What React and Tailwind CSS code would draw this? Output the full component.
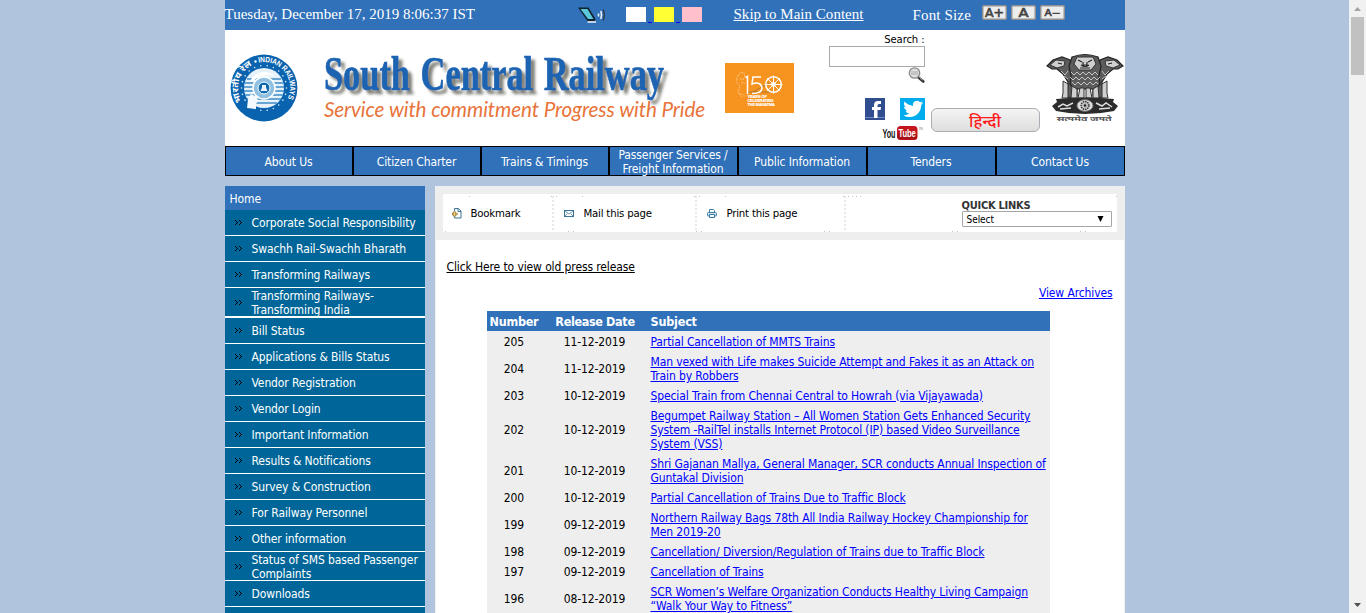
const NAV = [
  ['About Us', 'w-[126px]'],
  ['Citizen Charter', 'w-[126px]'],
  ['Trains & Timings', 'w-[126px]'],
  ['Passenger Services /\nFreight Information', 'w-[127px]'],
  ['Public Information', 'w-[127px]'],
  ['Tenders', 'w-[127px]'],
  ['Contact Us', 'w-[127px]'],
];

const MENU = [
  ['Corporate Social Responsibility', 'h-[26px] border-b'],
  ['Swachh Rail-Swachh Bharath', 'h-[26px] border-b'],
  ['Transforming Railways', 'h-[26px] border-b'],
  ['Transforming Railways-\nTransforming India', 'h-[30px] border-b-2 pt-px'],
  ['Bill Status', 'h-[26px] border-b'],
  ['Applications & Bills Status', 'h-[26px] border-b'],
  ['Vendor Registration', 'h-[26px] border-b'],
  ['Vendor Login', 'h-[26px] border-b'],
  ['Important Information', 'h-[26px] border-b'],
  ['Results & Notifications', 'h-[26px] border-b'],
  ['Survey & Construction', 'h-[26px] border-b'],
  ['For Railway Personnel', 'h-[26px] border-b'],
  ['Other information', 'h-[26px] border-b'],
  ['Status of SMS based Passenger\nComplaints', 'h-[29px] border-b pt-px'],
  ['Downloads', 'h-[26px] border-b'],
  ['', 'h-[26px] border-b'],
];

const RELEASES = [
  ['205', '11-12-2019', 'Partial Cancellation of MMTS Trains'],
  ['204', '11-12-2019', 'Man vexed with Life makes Suicide Attempt and Fakes it as an Attack on\nTrain by Robbers'],
  ['203', '10-12-2019', 'Special Train from Chennai Central to Howrah (via Vijayawada)'],
  ['202', '10-12-2019', 'Begumpet Railway Station – All Women Station Gets Enhanced Security\nSystem -RailTel installs Internet Protocol (IP) based Video Surveillance\nSystem (VSS)'],
  ['201', '10-12-2019', 'Shri Gajanan Mallya, General Manager, SCR conducts Annual Inspection of\nGuntakal Division'],
  ['200', '10-12-2019', 'Partial Cancellation of Trains Due to Traffic Block'],
  ['199', '09-12-2019', 'Northern Railway Bags 78th All India Railway Hockey Championship for\nMen 2019-20'],
  ['198', '09-12-2019', 'Cancellation/ Diversion/Regulation of Trains due to Traffic Block'],
  ['197', '09-12-2019', 'Cancellation of Trains'],
  ['196', '08-12-2019', 'SCR Women’s Welfare Organization Conducts Healthy Living Campaign\n“Walk Your Way to Fitness”'],
];

function ScreenReaderIcon() {
  return (
    <svg width="28" height="17" viewBox="0 0 28 17" className="-ml-px shrink-0">
      <path d="M0 1.500h10.500l7 11.500-1 2H9.500z" fill="#10222c" />
      <path d="M2.500 3h7l6 10h-5.500z" fill="#5bc8dc" />
      <path d="M9.500 16h8.500" stroke="#fff" strokeWidth="1.400" />
      <path d="M20.500 7.500v3M22.800 5q1.500 4 0 8" fill="none" stroke="#eef2f6" strokeWidth="1.600" />
      <path d="M25.200 3.500q2.200 5.500 0 11" fill="none" stroke="#333" strokeWidth="1.200" />
    </svg>
  );
}

function SizeButton({ label, wide }) {
  return (
    <svg width="25" height="15" viewBox="0 0 25 15">
      <rect x=".75" y=".75" width="23.500" height="13.500" rx="1" fill="#ededed" stroke="#8f9192" strokeWidth="1.500" />
      <text x="12.500" y={label === 'A−' ? 10.8 : 11.5} textAnchor="middle" textLength={wide} lengthAdjust="spacingAndGlyphs" fontFamily="DejaVu Sans" stroke="#444" strokeWidth=".6" fontSize={label === 'A−' ? 9 : 11.5} fill="#444">{label}</text>
    </svg>
  );
}

function RailwayEmblem() {
  const dots = Array.from({ length: 22 }, (_, i) => (i * 2 * Math.PI) / 22);
  return (
    <svg width="68" height="68" viewBox="0 0 68 68">
      <defs>
        <path id="arcR" d="M28.700 8.600A26 26 0 0 1 55.500 48.800" />
        <path id="arcL" d="M12 47.500A25.700 25.700 0 0 1 23.500 10.500" />
      </defs>
      <circle cx="34" cy="34" r="33.400" fill="#0a63ae" />
      {dots.map((a, i) => <circle key={i} cx={34 + 22.500 * Math.cos(a)} cy={34 + 22.500 * Math.sin(a)} r=".8" fill="#d9ecfa" />)}
      <circle cx="34" cy="34" r="20" fill="#e6f2fa" />
      <path d="M17 25h34M15 29h38M14 33h40M14 37h40M15 41h38M17 45h34M21 49h26" stroke="#3f8cc6" strokeWidth="1.300" />
      <circle cx="34" cy="34" r="11" fill="#8fc0e2" stroke="#fff" strokeWidth="1.500" />
      <circle cx="34" cy="34" r="6" fill="#0f6ab2" stroke="#fff" />
      <path d="M32 31h4v2.500l1.500 3.500h-7l1.500-3.500z" fill="#e8f4fc" />
      <path d="M17 54l1-9 3-5 6 3 1 4-2 3v5z" fill="#f4fafd" />
      <path d="M20 27q5-9 14-9q8 0 10 4q-6-2-11 0q-7 1-10 6z" fill="#fff" />
      <text fontFamily="Liberation Sans" fontWeight="bold" fontSize="7.600" fill="#fff"><textPath href="#arcR" textLength="57" lengthAdjust="spacingAndGlyphs">INDIAN RAILWAYS</textPath></text>
      <text fontFamily="Noto Sans, sans-serif" fontWeight="bold" fontSize="8.500" fill="#fff"><textPath href="#arcL" textLength="42" lengthAdjust="spacingAndGlyphs">भारतीय रेल</textPath></text>
      <circle cx="25.500" cy="7.500" r="1.200" fill="#fff" />
    </svg>
  );
}

function Wordmark() {
  return (
    <svg width="400" height="84" viewBox="0 0 400 84">
      <defs>
        <filter id="soft" x="-5%" y="-20%" width="112%" height="150%">
          <feDropShadow dx="4" dy="4" stdDeviation="1.700" floodColor="#55554a" floodOpacity=".75" />
        </filter>
      </defs>
      <text x="4" y="45" textLength="340" lengthAdjust="spacingAndGlyphs" wordSpacing="3" filter="url(#soft)" fill="#1c63b2" stroke="#1c63b2" strokeWidth=".6" fontFamily="Liberation Serif" fontWeight="bold" fontSize="49">South Central Railway</text>
      <text x="4" y="72" fontFamily="Lato" fontStyle="italic" fontSize="21" fill="#e8743b" textLength="381" lengthAdjust="spacingAndGlyphs">Service with commitment Progress with Pride</text>
    </svg>
  );
}

function MahatmaBadge() {
  return (
    <svg width="69" height="50" viewBox="0 0 69 50">
      <rect width="69" height="50" fill="#f79420" />
      <path d="M13 13q2-5 6-3l1 5M13 13q-2 3-1 7l3 3-2 6 4 5M15 16h5M16 20q3-1 4 1M14 31q5 0 6 3" fill="none" stroke="#fbc98c" strokeDasharray="1.500 1" />
      <path d="M28 29l16-9M23 29h28" stroke="#8d6a35" strokeWidth=".7" />
      <g fill="none" stroke="#fff" strokeWidth="1.500">
        <path d="M20.500 14.500l2-1v17.500M36 14h-8l-1 7q9-3 10 4q0 5.500-10 5.500" />
        <circle cx="48.500" cy="21.500" r="7.800" />
        <circle cx="48.500" cy="21.500" r="1.700" />
        <path strokeWidth="1" d="M48.500 12.500v18M39.500 21.500h18M42.300 15.300l12.400 12.400M42.300 27.700l12.400-12.400" />
      </g>
      <g fontFamily="Liberation Sans" fontWeight="bold" fontSize="3.600" fill="#fff" stroke="#fff" strokeWidth=".15">
        <text transform="translate(22.5 34.8) scale(1.1 1)">YEARS OF</text>
        <text transform="translate(22.5 38.7) scale(1.06 1)">CELEBRATING</text>
        <text transform="translate(22.5 42.6) scale(1.08 1)">THE MAHATMA</text>
      </g>
    </svg>
  );
}

function LionCapital() {
  return (
    <svg width="80" height="72" viewBox="0 0 80 72">
      <g fill="#5c5c5c" stroke="#222" strokeWidth="1.200">
        <path d="M2 13l6-6 9-3 8 3 3 8 4 6v22l-10 2 1-16-5-8-6-5-5 0z" />
        <path d="M78 13l-6-6-9-3-8 3-3 8-4 6v22l10 2-1-16 5-8 6-5 5 0z" />
        <path d="M27 4q13-5 26 0l3 9-2 10 1 8-4 5H29l-4-5 1-8-2-10z" />
      </g>
      <g fill="#cfcfcf" stroke="#333" strokeWidth="1">
        <path d="M32 4h16l3 7-5 6H34l-5-6z" />
        <path d="M5 12l6-5 9 1-1 5-7 2zM75 12l-6-5-9 1 1 5 7 2z" />
        <path d="M18 28l5 3v14h-6l1-5zM62 28l-5 3v14h6l-1-5zM27 33l5 3v9h-6zM53 33l-5 3v9h6zM35 35h4v10h-6zM45 35h-4v10h6z" />
      </g>
      <path d="M33 7l4 2M47 7l-4 2M36 12q4 3 8 0M35 15h10M13 10l4 1M67 10l-4 1M38 9v3h4V9" stroke="#222" strokeWidth="1.200" fill="none" />
      <path d="M26 19l3 3 3-3 3 3 3-3 3 3 3-3 3 3 3-3 3 3M25 24l3 3 3-3 3 3 3-3 3 3 3-3 3 3 3-3 3 3 3-3M27 29l3 3 3-3 3 3 3-3 3 3 3-3 3 3 3-3 2 2M16 18l4 4 3-4M19 23l4 3M64 18l-4 4-3-4M61 23l-4 3" stroke="#c4c4c4" fill="none" />
      <path d="M11 46q29-3 58 0l-1 3 5 4-4 5q-29 6-58 0l-4-5 5-4z" fill="#2b2b2b" />
      <ellipse cx="40" cy="52.500" rx="8" ry="5.800" fill="#ddd" stroke="#777" />
      <circle cx="40" cy="52.500" r="4" fill="#bbb" stroke="#333" strokeWidth="1.300" strokeDasharray="1.500 .8" />
      <circle cx="40" cy="52.500" r="1.200" fill="#222" />
      <path d="M13 54l5-3 4 2 6-3M15 56l11-1M51 50l6 3 4-3 6 4M54 56l11-1" stroke="#ddd" strokeWidth="1.500" fill="none" />
      <text x="39" y="68" textAnchor="middle" textLength="55" lengthAdjust="spacingAndGlyphs" fontFamily="Noto Sans, sans-serif" fontSize="7" fontWeight="bold" fill="#555">सत्यमेव जयते</text>
    </svg>
  );
}

function Magnifier() {
  return (
    <svg width="17" height="16" viewBox="0 0 17 16" className="block">
      <path d="M10.500 10.500l4.800 4" stroke="#333" strokeWidth="2.600" strokeLinecap="round" />
      <circle cx="6.500" cy="6" r="5.200" fill="#dedede" stroke="#8b8b8b" strokeWidth="1.300" />
      <path d="M3 5h7M3 7h7" stroke="#aaa" />
      <path d="M11.500 10.500l3 2.500" stroke="#bbb" />
    </svg>
  );
}

function Facebook() {
  return (
    <svg width="20" height="22" viewBox="0 0 20 22">
      <rect width="20" height="22" fill="#2f4d8f" />
      <path d="M0 19h20v1H0z" fill="#6e86bb" />
      <path d="M9 20v-8H7V9h2V7q0-4 4-4h3v3h-2q-1.500 0-1.500 1.500V9H16l-.4 3h-3.100v8z" fill="#fff" />
    </svg>
  );
}

function Twitter() {
  return (
    <svg width="25" height="22" viewBox="0 0 25 22">
      <rect width="25" height="22" fill="#00aced" />
      <path transform="translate(3.300 1) scale(.83)" d="M23.950 4.570a10 10 0 01-2.820.780 4.960 4.960 0 002.160-2.720c-.950.550-2 .950-3.130 1.180a4.920 4.920 0 00-8.380 4.480C7.690 8.100 4.070 6.130 1.640 3.160a4.920 4.920 0 001.520 6.570 4.900 4.900 0 01-2.230-.610v.060c0 2.380 1.690 4.370 3.950 4.820a5 5 0 01-2.210.090 4.940 4.940 0 004.600 3.420A9.870 9.870 0 010 19.540a13.990 13.990 0 007.550 2.210c9.050 0 14-7.500 14-13.980 0-.210 0-.420-.020-.630a9.940 9.940 0 002.420-2.570z" fill="#fff" />
    </svg>
  );
}

function YouTube() {
  return (
    <svg width="43" height="17" viewBox="0 0 43 17">
      <text transform="translate(.5 12.5) scale(.6 1)" fontFamily="Liberation Sans" fontWeight="bold" fontSize="12" fill="#111">You</text>
      <rect x="15" y="1" width="20.500" height="14" rx="3.500" fill="#c4161c" />
      <rect x="15.500" y="8" width="19.500" height="6.500" rx="3" fill="#8f0d11" opacity=".6" />
      <text transform="translate(16.5 12.3) scale(.66 1)" fontFamily="Liberation Sans" fontWeight="bold" fontSize="11.500" fill="#fff">Tube</text>
      <text x="37" y="5" fontFamily="Liberation Sans" fontSize="4" fill="#888">IN</text>
    </svg>
  );
}

function Chevrons() {
  return (
    <svg width="7" height="5" viewBox="0 0 7 5" className="ml-[10px] mr-[10px] shrink-0" shapeRendering="crispEdges">
      <path d="M0 0h1v1H0zM1 1h1v1H1zM2 2h1v1H2zM1 3h1v1H1zM0 4h1v1H0zM4 0h1v1H4zM5 1h1v1H5zM6 2h1v1H6zM5 3h1v1H5zM4 4h1v1H4z" fill="#000" />
    </svg>
  );
}

function BookmarkIcon() {
  return (
    <svg width="11" height="11" viewBox="0 0 11 11" className="shrink-0">
      <path d="M3.500 3V.5h4l2.500 2.500v7H3.500V8.500M7 .5V3.500h3" fill="#fff" stroke="#3d7397" />
      <path d="M3.500 3.500v5M1 6h5.500" stroke="#8a6d2f" strokeWidth="2.600" />
      <path d="M3.500 4v4M1.500 6h4.500" stroke="#f3cf70" />
    </svg>
  );
}

function MailIcon() {
  return (
    <svg width="10" height="7" viewBox="0 0 10 7" className="shrink-0">
      <rect x=".5" y=".5" width="9" height="6" fill="#fff" stroke="#3d7397" />
      <path d="M1 1l4 3 4-3M1 6l2.500-2.500M9 6L6.500 3.500" fill="none" stroke="#5d93b5" strokeWidth=".9" />
    </svg>
  );
}

function PrintIcon() {
  return (
    <svg width="10" height="9" viewBox="0 0 10 9" className="shrink-0">
      <path d="M2.500 3.500v-3h4l1 1v2" fill="#fff" stroke="#3d80aa" />
      <rect x=".5" y="3.500" width="9" height="3.500" rx="1" fill="#cfe2ee" stroke="#3d80aa" />
      <path d="M2.500 5.500h5v3h-5z" fill="#fff" stroke="#2f78a8" />
    </svg>
  );
}

function Divider() {
  return (
    <svg width="2" height="35" viewBox="0 0 2 35" className="mt-[2px] shrink-0 self-start">
      <path d="M1 0v35" stroke="#e8e8e8" strokeWidth="2" strokeDasharray="2 2" />
    </svg>
  );
}

function Dots() {
  return (
    <svg width="674" height="38" viewBox="0 0 674 38" className="pointer-events-none absolute left-0 top-0">
      <path fill="#c4c4c4" d="M26 2h1v1h-1zM108 2h1v1h-1zM113 2h1v1h-1zM139 2h1v1h-1zM251 2h1v1h-1zM256 2h1v1h-1zM282 2h1v1h-1zM400 2h1v1h-1zM405 2h1v1h-1zM409 2h1v1h-1zM413 2h1v1h-1zM417 2h1v1h-1zM673 2h1v1h-1zM2 37h1v1h-1zM125 37h1v1h-1zM130 37h1v1h-1zM253 37h1v1h-1zM258 37h1v1h-1zM381 37h1v1h-1zM386 37h1v1h-1zM509 37h1v1h-1zM514 37h1v1h-1zM637 37h1v1h-1zM642 37h1v1h-1z" />
    </svg>
  );
}

function TopBar() {
  return (
    <div className="flex h-[30px] bg-[#3071b9] font-['Liberation_Serif',serif] text-[15px] leading-[28px] tracking-[-0.04px] text-white">
      <span className="w-[354px] whitespace-nowrap text-[15px] tracking-[0px]">Tuesday, December 17, 2019 8:06:37 IST</span>
      <div className="w-[47px] pt-[6px]"><ScreenReaderIcon /></div>
      <div className="flex w-[108px] pt-[7px]">
        <span className="h-[15px] w-[20px] bg-white" />
        <span className="mx-[2px] mt-[15px] h-px w-[4px] bg-[#0000ee]" />
        <span className="h-[15px] w-[20px] bg-[#ffff33]" />
        <span className="mx-[2px] mt-[15px] h-px w-[4px] bg-[#0000ee]" />
        <span className="h-[15px] w-[20px] bg-[#ffc0cb]" />
      </div>
      <a className="w-[179px] whitespace-nowrap tracking-[0.02px] underline">Skip to Main Content</a>
      <span className="w-[69px] whitespace-nowrap pt-px tracking-[0.15px]">Font Size</span>
      <div className="flex gap-[4px] pt-[5px]">
        <SizeButton label="A+" wide={19} />
        <SizeButton label="A" wide={10} />
        <SizeButton label="A−" wide={16} />
      </div>
    </div>
  );
}

function Banner() {
  return (
    <div className="flex h-[116px] bg-white">
      <div className="w-[95px] pl-[5px] pt-[24px]"><RailwayEmblem /></div>
      <div className="w-[405px] pt-[15px]"><Wordmark /></div>
      <div className="w-[104px] pt-[33px]"><MahatmaBadge /></div>
      <div className="flex w-[96px] flex-col items-end">
        <span className="h-[16px] whitespace-nowrap pt-[3px] text-[11.200px]">Search :</span>
        <input className="h-[21px] w-[96px] border border-[#a9a9a9] bg-white" />
        <div className="h-[31px]"><Magnifier /></div>
        <div className="flex w-[60px] justify-between"><Facebook /><Twitter /></div>
        <div className="mt-[5px] h-[17px] w-[43px]"><YouTube /></div>
      </div>
      <div className="ml-[6px] mt-[78px] flex h-[24px] w-[109px] items-center justify-center rounded-[6px] border-[1.500px] border-[#a9aeb4] bg-gradient-to-b from-[#f4f4f4] to-[#dedede] pt-px font-['Noto_Sans',sans-serif] text-[16.500px] font-medium leading-[20px] tracking-normal text-[#ff1a1a]">हिन्दी</div>
      <div className="ml-[5px] pt-[23px]"><LionCapital /></div>
    </div>
  );
}

function Toolbar() {
  return (
    <div className="bg-[#eeeeee] p-[8px]">
      <div className="relative flex h-[38px] items-center bg-white text-[11.300px] tracking-[-0.2px]">
        <Dots />
        <div className="flex w-[109px] items-center gap-[9px] pl-[8px]"><BookmarkIcon /><span className="pt-px">Bookmark</span></div>
        <Divider />
        <div className="flex w-[141px] items-center gap-[10px] pl-[10px]"><MailIcon /><span className="pt-px">Mail this page</span></div>
        <Divider />
        <div className="flex w-[147px] items-center gap-[10px] pl-[10px]"><PrintIcon /><span className="pt-px">Print this page</span></div>
        <Divider />
        <div className="ml-[116px] w-[150px] self-start pt-[6px]">
          <div className="h-[11px] whitespace-nowrap text-[11px] font-bold leading-[11px] tracking-[-0.25px] text-[#333]">QUICK LINKS</div>
          <div className="flex h-[16px] items-center justify-between rounded-[1px] border border-[#a6a6a6] pl-[4px] pr-[6px] text-[10px] leading-[14px] tracking-[-0.05px]">
            <span className="pt-px">Select</span>
            <svg width="8" height="6" viewBox="0 0 8 6"><path d="M.5 0h6L3.500 6z" fill="#000" /></svg>
          </div>
        </div>
      </div>
    </div>
  );
}

function ReleaseTable() {
  return (
    <table className="ml-[51px] mt-[11px] w-[563px] table-fixed border-collapse bg-[#eeeeee]">
      <colgroup><col className="w-[54px]" /><col className="w-[107px]" /><col className="w-[402px]" /></colgroup>
      <thead>
        <tr className="h-[20px] bg-[#3071b9] text-left text-[12.500px] text-white">
          <th className="whitespace-nowrap pl-[3px] pt-px tracking-[-0.25px]">Number</th>
          <th className="whitespace-nowrap pl-[2px] pt-px text-center tracking-[-0.35px]">Release Date</th>
          <th className="whitespace-nowrap pl-[3px] pt-px tracking-[-0.2px]">Subject</th>
        </tr>
      </thead>
      <tbody>
        {RELEASES.map(([number, date, subject]) => (
          <tr key={number}>
            <td className="pb-[2px] pl-px pt-[4px] text-center">{number}</td>
            <td className="pb-[2px] pl-px pt-[4px] text-center">{date}</td>
            <td className="whitespace-pre pb-[2px] pl-[3px] pt-[4px] tracking-[-0.11px]"><a className="text-[#0000ff] underline">{subject}</a></td>
          </tr>
        ))}
      </tbody>
    </table>
  );
}

export default function App() {
  return (
    <div className="flex h-[613px] overflow-hidden bg-[#b0c4de] font-['DejaVu_Sans_Condensed','DejaVu_Sans',sans-serif] text-[12px] leading-[14px] tracking-[-0.11px] text-black">
      <div className="flex flex-1 justify-center">
        <div className="w-[900px]">
          <TopBar />
          <Banner />
          <nav className="flex h-[30px] gap-[2px] bg-black p-px text-white">
            {NAV.map(([label, width]) => (
              <a key={label} className={`${width} flex items-center justify-center whitespace-pre bg-[#3071b9] pt-[2px] text-center`}>{label}</a>
            ))}
          </nav>
          <div className="mt-[10px] flex gap-[10px]">
            <aside className="w-[200px] text-white">
              <div className="h-[24px] bg-[#3071b9] pl-[5px] pt-[6px] tracking-[-0.05px]">Home</div>
              {MENU.map(([label, size]) => (
                <div key={label} className={`${size} flex items-center border-white bg-[#006699]`}>
                  <Chevrons /><span className="whitespace-pre">{label}</span>
                </div>
              ))}
            </aside>
            <main className="h-[427px] w-[690px] overflow-hidden bg-white">
              <Toolbar />
              <div className="border-x border-[#eeeeee]">
                <div className="pl-[11px] pt-[20px]"><a className="underline">Click Here to view old press release</a></div>
                <div className="pr-[11px] pt-[12px] text-right"><a className="text-[#0000ff] underline">View Archives</a></div>
                <ReleaseTable />
              </div>
            </main>
          </div>
        </div>
      </div>
      <div className="flex w-[17px] flex-col items-center justify-between bg-[#f1f1f1] pb-[6px] pt-[7px]">
        <div className="flex flex-col items-center gap-[6px]">
          <svg width="7" height="4" viewBox="0 0 7 4"><path d="M0 4h7L3.500 0z" fill="#a3a3a3" /></svg>
          <div className="h-[58px] w-[13px] bg-[#c1c1c1]" />
        </div>
        <svg width="7" height="4" viewBox="0 0 7 4"><path d="M0 0h7L3.500 4z" fill="#505050" /></svg>
      </div>
    </div>
  );
}
